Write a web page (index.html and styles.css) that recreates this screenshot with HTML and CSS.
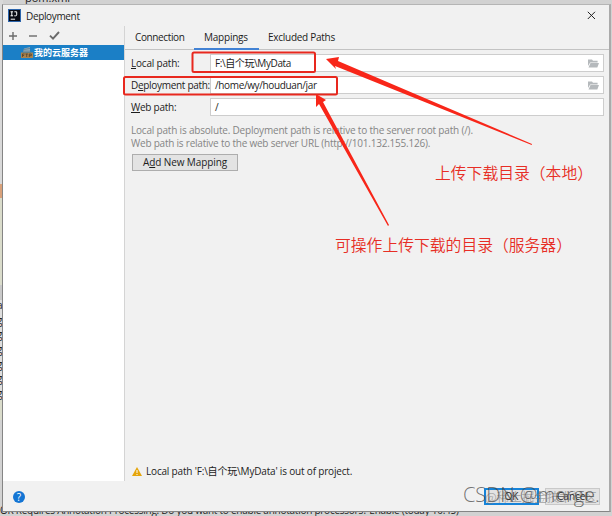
FILE: index.html
```html
<!DOCTYPE html>
<html lang="zh">
<head>
<meta charset="utf-8">
<title>Deployment</title>
<link rel="stylesheet" href="styles.css">
</head>
<body>
<div class="backdrop">
  <span class="bg-top">pom.xml</span>
  <span class="bg-bottom">OK Requires Annotation Processing. Do you want to enable annotation processors? Enable (today 10:45)</span>
  <div class="bg-letters"><span>a</span><span>g</span><span>g</span><span>g</span><span>g</span><span>g</span><span>g</span></div>
</div>
<main class="window">
  <header class="titlebar">
    <svg class="logo" width="13" height="13" viewBox="0 0 13 13"><rect width="13" height="13" fill="#2b64ab"/><rect x="1" y="1" width="11" height="11" fill="#080a14"/><path d="M2.5 2.8h2.6M3.8 2.8v4M2.5 6.8h2.6M6.4 2.8h2.3v3.1q0 .9-1 .9H6.3M2.7 10.2h4.4" stroke="#fff" fill="none"/></svg>
    <h1>Deployment</h1>
    <svg class="close" width="9" height="9" viewBox="0 0 9 9"><path d="M.8.8l7.2 7.2M8 .8L.8 8" stroke="#222" fill="none"/></svg>
  </header>
  <div class="body">
    <aside class="sidebar">
      <div class="toolbar">
        <svg width="8" height="8" viewBox="0 0 8 8"><path d="M4 0v8M0 4h8" stroke="#6b6b6b" stroke-width="1.4"/></svg>
        <svg width="8" height="8" viewBox="0 0 8 8"><path d="M0 4h8" stroke="#6b6b6b" stroke-width="1.4"/></svg>
        <svg width="11" height="9" viewBox="0 0 11 9"><path d="M1 4.600l3 3L10 1" stroke="#6b6b6b" stroke-width="1.9" fill="none"/></svg>
      </div>
      <div class="server">
        <svg width="12" height="13" viewBox="0 0 12 13"><path d="M3 2.500l6-1.500V6H2z" fill="#8fa9b8"/><path d="M2.500 3.600l6.500-1.200M2 5.200h8" stroke="#59798c" stroke-width=".7"/><rect x="0" y="6.500" width="12" height="5.500" fill="#a9834f"/><path d="M1.500 11V8h2M1.500 9.500h1.600M4.500 8h2.400M5.700 8v3M8.300 11V8h2v1.700H8.300" stroke="#51402b" stroke-width=".8" fill="none"/></svg>
        <span>我的云服务器</span>
      </div>
    </aside>
    <section class="content">
      <nav class="tabs"><span class="tab t1">Connection</span><span class="tab t2 active">Mappings</span><span class="tab t3">Excluded Paths</span></nav>
      <div class="form">
        <label><span class="l1"><u>L</u>ocal path:</span></label>
        <div class="field"><span class="v1">F:\自个玩\MyData</span><svg class="folder" width="11" height="9" viewBox="0 0 11 9"><path d="M0 7V.5h4l1 1.300h4.600v1.600H2.200z" fill="#b5b9bc"/><path d="M2.500 4H11L9.300 8.500H.5z" fill="#b5b9bc"/></svg></div>
        <label><span class="l2">D<u>e</u>ployment path:</span></label>
        <div class="field"><span class="v2">/home/wy/houduan/jar</span><svg class="folder" width="11" height="9" viewBox="0 0 11 9"><path d="M0 7V.5h4l1 1.300h4.600v1.600H2.200z" fill="#b5b9bc"/><path d="M2.500 4H11L9.300 8.500H.5z" fill="#b5b9bc"/></svg></div>
        <label><span class="l3"><u>W</u>eb path:</span></label>
        <div class="field"><span>/</span></div>
      </div>
      <div class="hint"><p class="h1">Local path is absolute. Deployment path is relative to the server root path (/).</p><p class="h2">Web path is relative to the web server URL (http://101.132.155.126).</p></div>
      <button class="add">A<u>d</u>d New Mapping</button>
      <div class="warning"><svg width="10" height="9" viewBox="0 0 10 9"><path d="M5 0l5 9H0z" fill="#e5a50b"/><path d="M5 3v3M5 7v1" stroke="#fff"/></svg><span>Local path 'F:\自个玩\MyData' is out of project.</span></div>
    </section>
  </div>
  <footer class="footer">
    <span class="help">?</span>
    <button class="ok">OK</button><button class="cancel">Cancel</button>
  </footer>
</main>
<svg class="marks" width="612" height="516" viewBox="0 0 612 516">
  <g fill="none" stroke="#e8281e" stroke-width="2"><rect x="192.500" y="52.500" width="122.500" height="19.500" rx="1.500"/><rect x="124" y="77" width="213" height="17.500" rx="1.500"/></g>
  <g fill="#f82619"><path d="M326 59l13-2-1 4 194 83-.3 1L335 66l1 3z"/><path d="M316 94l10 6-3 2 66 123-1 1L319 104l-3 3z"/></g>
</svg>
<div class="note local">上传下载目录（本地）</div>
<div class="note remote">可操作上传下载的目录（服务器）</div>
<div class="mark-sub">@稀土掘金技术社区</div>
<div class="mark-main">CSDN @merge.</div>
</body>
</html>
```
FILE: styles.css
```css
* { box-sizing: border-box; }
body { margin: 0; width: 612px; height: 516px; position: relative; overflow: hidden; font: 10px/14px "Open Sans", "Noto Sans CJK SC", sans-serif; color: #1c1c1c; background: #d2d2d2; }
h1, p { margin: 0; font: inherit; }
button { font: inherit; color: inherit; padding: 0; }
span { white-space: pre; }
u { text-decoration-thickness: 1px; text-underline-offset: 1px; }
.backdrop { position: absolute; inset: 0; background: linear-gradient(#d9d9d9 0 184px, #d9a17a 184px 198px, #dadccb 198px 285px, #c9c9c9 285px 300px, #dedede 300px 400px, #dadccb 400px 420px, #d2d2d2 420px) left / 3px 100% no-repeat, #d2d2d2; }
.bg-top { position: absolute; left: 25px; top: -9px; font-size: 11px; }
.bg-bottom { position: absolute; left: 0; top: 503px; letter-spacing: -.25px; }
.bg-letters { position: absolute; left: -3px; top: 298px; display: grid; grid-auto-rows: 14.7px; }
.window { position: absolute; left: 2px; top: 4px; width: 609px; height: 508px; background: #f1f1f1; border: 1px solid #858585; border-top-color: #b5b5b5; border-right: 2px solid #aaa; display: flex; flex-direction: column; }
.titlebar { height: 21px; display: flex; align-items: center; padding: 0 13px 0 5px; flex: none; }
.titlebar h1 { margin-left: 5px; letter-spacing: -.35px; }
.close { margin-left: auto; }
.body { height: 455px; display: flex; flex: none; }
.sidebar { width: 122px; background: #fff; border-right: 1px solid #d4d4d4; }
.toolbar { height: 19px; background: #f1f1f1; display: flex; align-items: center; padding-left: 6px; gap: 12px; }
.server { height: 15px; background: #1b7fc6; color: #fff; display: flex; align-items: center; padding-left: 18px; gap: 1px; font-size: 9px; font-weight: bold; }
.content { flex: 1; display: flex; flex-direction: column; padding-bottom: 3px; }
.tabs { height: 24px; border-bottom: 1px solid #c3c3c3; display: flex; flex: none; }
.tab { height: 24px; line-height: 23px; }
.t1 { width: 69px; padding-left: 10px; letter-spacing: -.37px; }
.t2 { width: 65px; padding-left: 10px; letter-spacing: -.22px; }
.t3 { padding-left: 9px; letter-spacing: -.27px; }
.active { border-bottom: 2px solid #4282d4; }
.form { display: grid; grid-template-columns: 79px 394px; grid-auto-rows: 18px; row-gap: 4px; padding: 4px 0 0 6px; }
label { line-height: 18px; white-space: nowrap; }
.l1 { letter-spacing: -.2px; }
.l2 { letter-spacing: -.3px; }
.l3 { letter-spacing: -.25px; }
.field { background: #fff; border: 1px solid #cdcdcd; display: flex; align-items: center; padding: 0 4px; }
.v1 { letter-spacing: -.4px; }
.v2 { letter-spacing: -.36px; }
.folder { margin-left: auto; }
.hint { margin: 8px 0 0 6px; color: #858585; line-height: 13px; }
.h1 { letter-spacing: -.19px; }
.h2 { letter-spacing: -.22px; }
.add { width: 106px; height: 17px; margin: 4px 0 0 7px; background: #e3e3e3; border: 1px solid #adadad; line-height: 15px; letter-spacing: -.1px; }
.warning { margin: auto 0 0 7px; display: flex; align-items: center; gap: 4px; letter-spacing: -.18px; }
.footer { flex: 1; display: flex; align-items: center; padding: 1px 9px 0 10px; }
.help { width: 12px; height: 12px; border-radius: 50%; background: #1475d4; color: #fff; text-align: center; line-height: 12px; margin-right: auto; }
.ok, .cancel { width: 55px; height: 17px; background: #e3e3e3; border: 1px solid #c9c9c9; line-height: 13px; }
.ok { border: 2px solid #1683d8; margin-right: 6px; }
.marks { position: absolute; left: 0; top: 0; }
.note { position: absolute; color: #e72e25; white-space: nowrap; font: 350 15.800px/22px "Noto Sans CJK SC", sans-serif; }
.local { left: 435px; top: 162px; }
.remote { left: 335px; top: 234px; }
.mark-main { position: absolute; left: 463px; top: 482px; color: #444b; font: 300 20px/26px "Open Sans", sans-serif; letter-spacing: -.05px; white-space: nowrap; }
.mark-sub { position: absolute; left: 485px; top: 488px; color: #7778; font: 12.500px/17px "Noto Sans CJK SC", sans-serif; white-space: nowrap; }
```
